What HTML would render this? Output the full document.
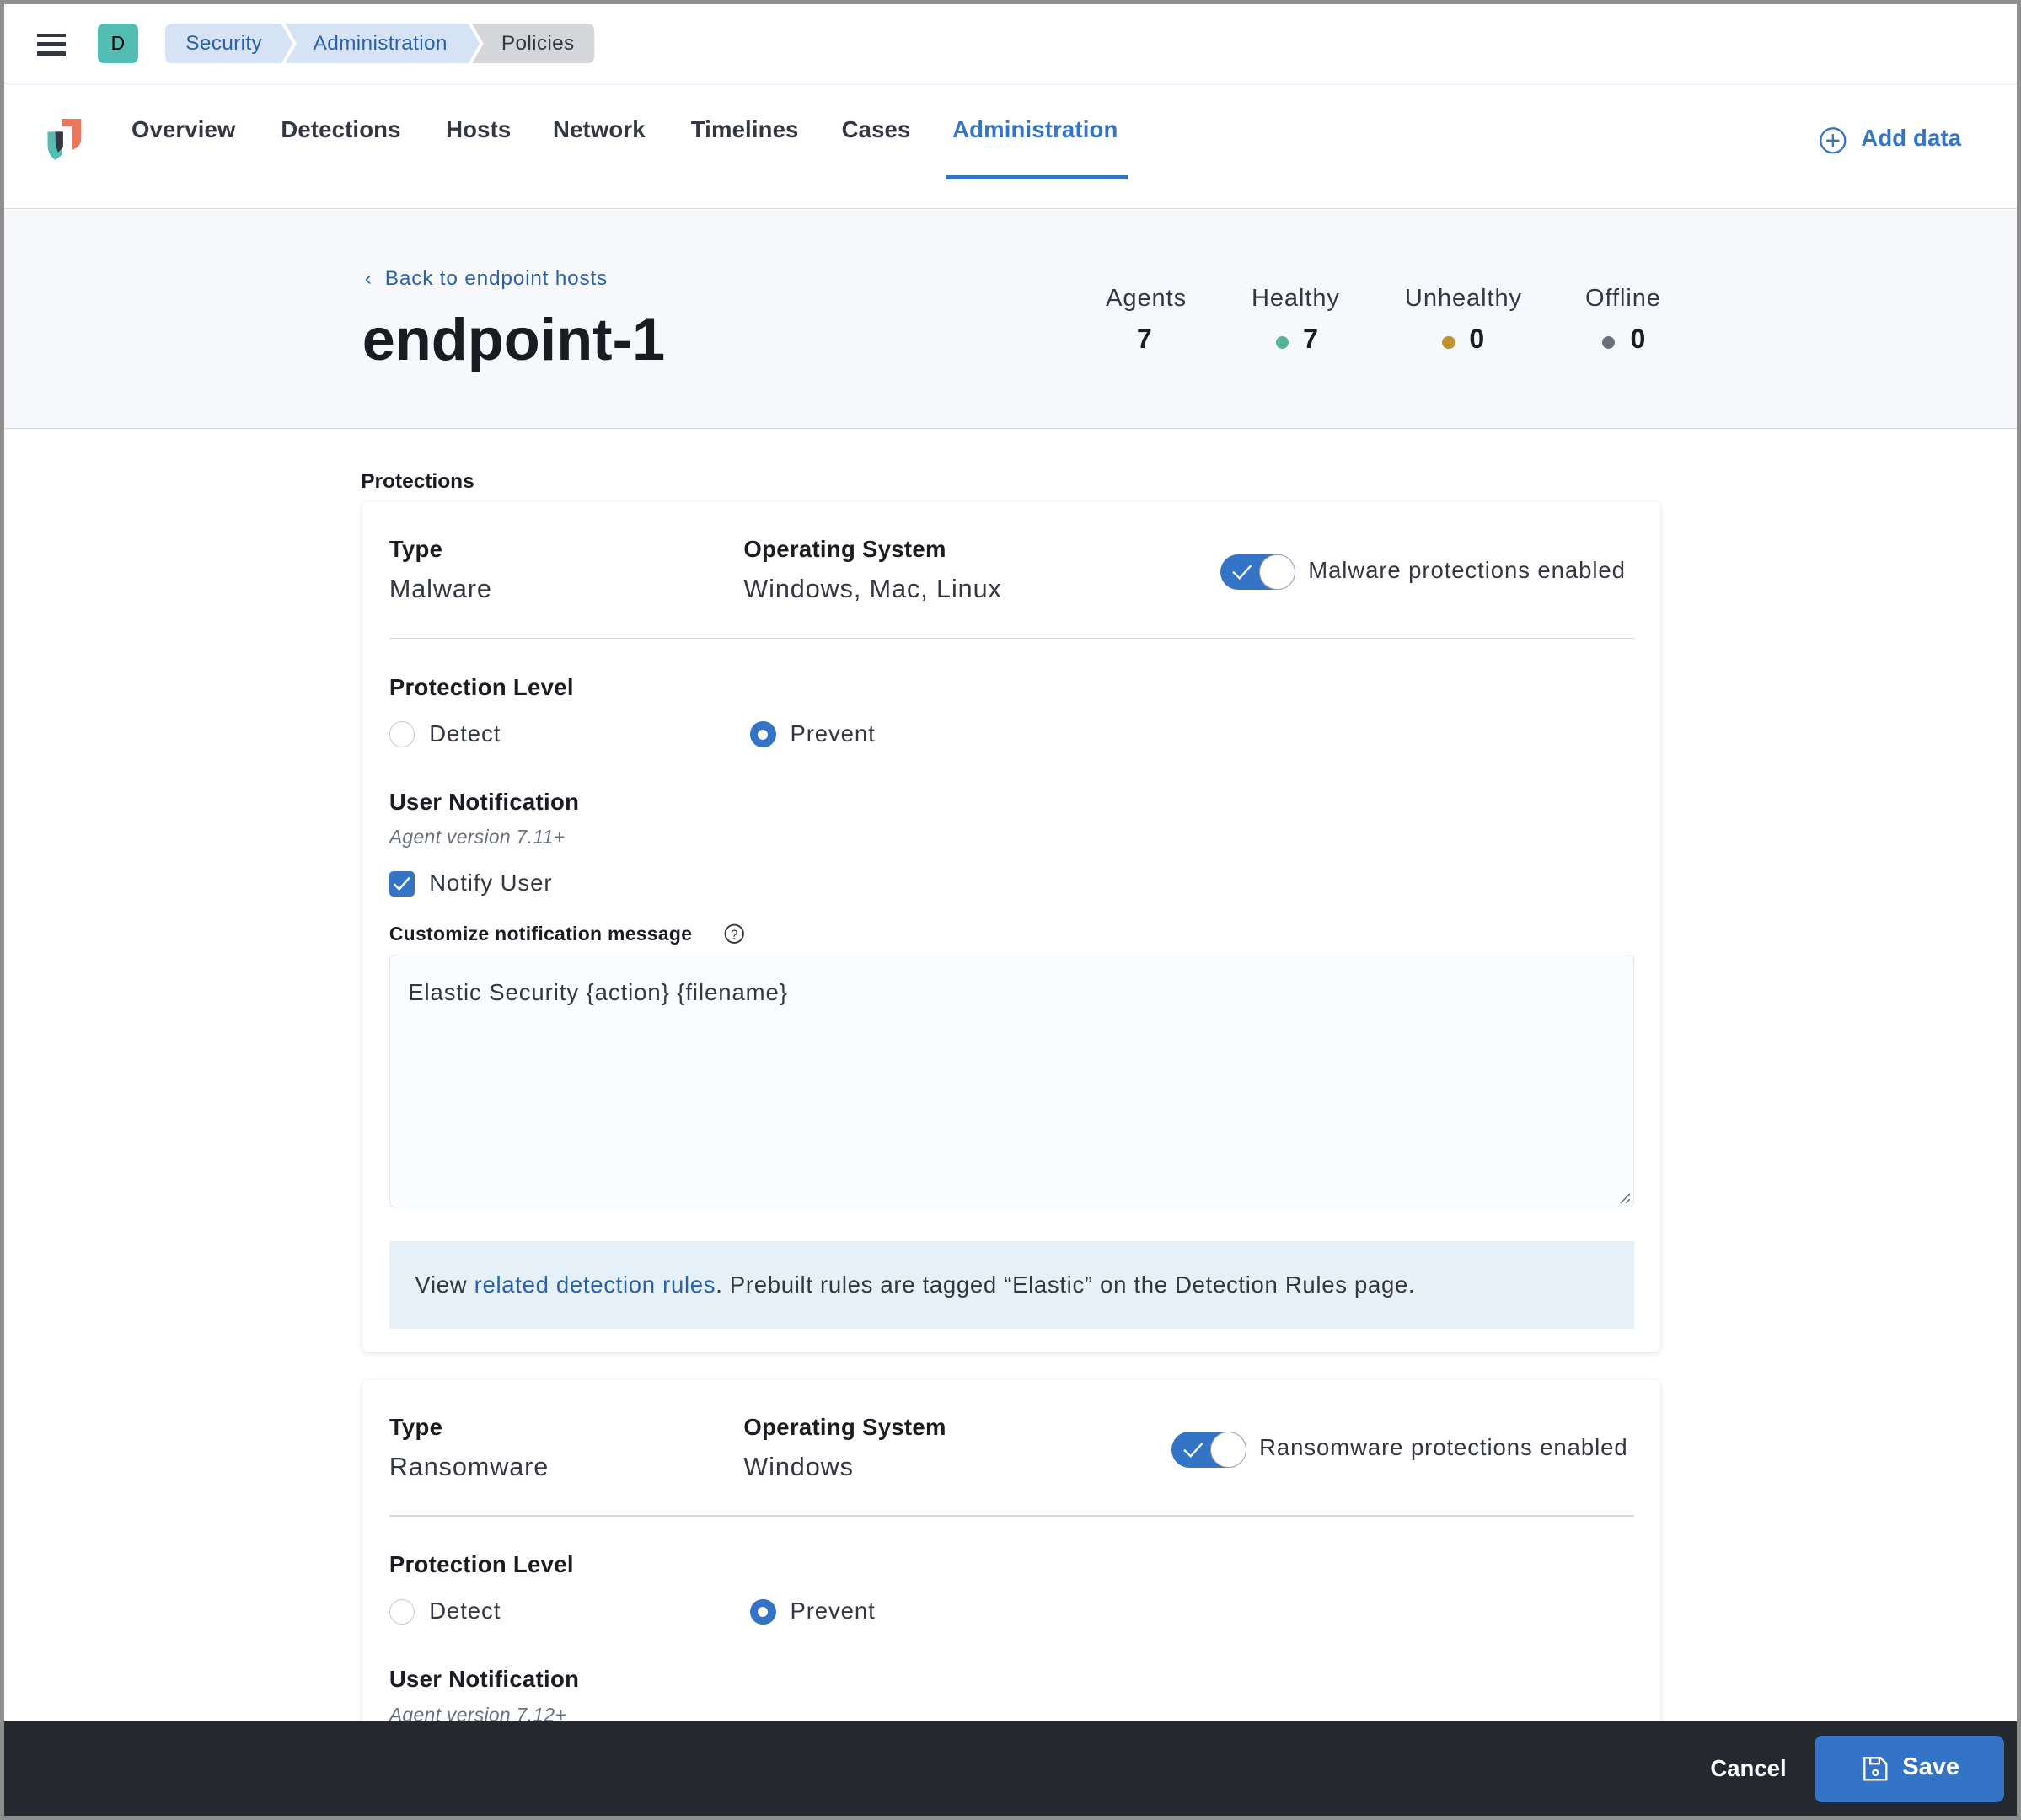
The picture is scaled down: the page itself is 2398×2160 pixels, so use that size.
<!DOCTYPE html>
<html><head><meta charset="utf-8"><style>
*{box-sizing:border-box;margin:0;padding:0}
html,body{width:2398px;height:2160px;overflow:hidden;background:#8e8e8e}
#root{zoom:1.5293;position:relative;width:1568px;height:1412px;font-family:"Liberation Sans",sans-serif;color:#343741}
#frame{position:absolute;left:3px;top:3px;width:1562px;height:1406px;background:#fff;overflow:hidden}
.abs{position:absolute}
.r{letter-spacing:0.6px}
.top{left:0;top:0;width:1562px;height:62px;background:#fff;border-bottom:1px solid #d3dae6;box-shadow:0 2px 3px rgba(0,0,0,.06)}
.crumb{position:absolute;top:15px;height:31px;line-height:31px;font-size:16px;letter-spacing:0.2px}
.nav{left:0;top:63px;width:1562px;height:96px;background:#fff;border-bottom:1px solid #d3dae6}
.nav span{position:absolute;top:24px;font-size:18px;font-weight:bold;color:#343741;letter-spacing:0.1px}
.hdr{left:0;top:160px;width:1562px;height:170px;background:#f7f8fc;border-bottom:1px solid #d3dae6}
.card{background:#fff;box-shadow:0 1px 4px rgba(0,0,0,.12);border-radius:4px}
.lbl{font-weight:bold;font-size:18px;color:#1a1c21;letter-spacing:0.2px}
.val{font-size:20px;color:#343741;letter-spacing:0.6px}
.radio{width:20px;height:20px;border-radius:50%;border:1px solid #c4c9d4;background:#fff}
.radio.on{background:#3474c7;border:none}
.radio.on::after{content:"";position:absolute;left:6px;top:6px;width:8px;height:8px;border-radius:50%;background:#fff}
.tog{width:58px;height:28px;border-radius:14px;background:#3474c7}
.tog::after{content:"";position:absolute;right:0;top:0;width:28px;height:28px;border-radius:50%;background:#fff;border:1px solid #98a2b3;box-sizing:border-box}
</style></head><body><div id="root"><div id="frame">
<div class="abs top">
 <div class="abs" style="left:26px;top:23px;width:22px;height:3px;background:#343741"></div>
 <div class="abs" style="left:26px;top:30px;width:22px;height:3px;background:#343741"></div>
 <div class="abs" style="left:26px;top:37px;width:22px;height:3px;background:#343741"></div>
 <div class="abs" style="left:73px;top:15px;width:31px;height:31px;border-radius:5px;background:#54bdb3;text-align:center;line-height:31px;font-size:15px;color:#000">D</div>
 <svg class="abs" style="left:125px;top:15px" width="335" height="31"><path d="M6 0H90L99 15.5L90 31H6Q0 31 0 25V6Q0 0 6 0Z" fill="#d6e3f4"/><path d="M93 0H235L244 15.5L235 31H93L102 15.5Z" fill="#d6e3f4"/><path d="M238 0H327Q333 0 333 6V25Q333 31 327 31H238L247 15.5Z" fill="#d5d6da"/></svg>
 <div class="crumb" style="left:141px;color:#2a62a8">Security</div>
 <div class="crumb" style="left:240px;color:#2a62a8">Administration</div>
 <div class="crumb" style="left:386px;color:#343741">Policies</div>
</div>
<div class="abs nav">
 <svg class="abs" style="left:33px;top:24px" width="30" height="36"><path d="M12 2H27V17Q27 24 20 26V8H12Z" fill="#e9785b"/><path d="M1 12H12V30L7 34Q1 30 1 22Z" fill="#54bdb3"/><path d="M7 12H13V24L9 28Q7 22 7 18Z" fill="#343741"/></svg>
 <span style="left:99px">Overview</span><span style="left:215px">Detections</span><span style="left:343px">Hosts</span><span style="left:426px">Network</span><span style="left:533px">Timelines</span><span style="left:650px">Cases</span><span style="left:736px;color:#3474c7">Administration</span>
 <div class="abs" style="left:731px;top:70px;width:141px;height:3px;background:#3474c7"></div>
 <svg class="abs" style="left:1408px;top:32px" width="22" height="22"><circle cx="11" cy="11" r="9.5" fill="none" stroke="#3474c7" stroke-width="1.5"/><path d="M11 6V16M6 11H16" stroke="#3474c7" stroke-width="1.5"/></svg>
 <span style="left:1441px;top:31px;color:#3474c7">Add data</span>
</div>
<div class="abs hdr">
 <div class="abs" style="left:280px;top:44px;font-size:16px;color:#2a62a8;letter-spacing:0.5px">‹&nbsp; Back to endpoint hosts</div>
 <div class="abs" style="left:278px;top:74px;font-size:46px;font-weight:bold;color:#1a1c21">endpoint-1</div>
 <div class="abs r" style="left:855px;top:58px;font-size:19px">Agents</div>
 <div class="abs" style="left:879px;top:88px;font-size:21px;font-weight:bold;color:#1a1c21">7</div>
 <div class="abs r" style="left:968px;top:58px;font-size:19px">Healthy</div>
 <div class="abs" style="left:987px;top:98px;width:10px;height:10px;border-radius:50%;background:#54b399"></div>
 <div class="abs" style="left:1008px;top:88px;font-size:21px;font-weight:bold;color:#1a1c21">7</div>
 <div class="abs r" style="left:1087px;top:58px;font-size:19px">Unhealthy</div>
 <div class="abs" style="left:1116px;top:98px;width:10px;height:10px;border-radius:50%;background:#c29231"></div>
 <div class="abs" style="left:1137px;top:88px;font-size:21px;font-weight:bold;color:#1a1c21">0</div>
 <div class="abs r" style="left:1227px;top:58px;font-size:19px">Offline</div>
 <div class="abs" style="left:1240px;top:98px;width:10px;height:10px;border-radius:50%;background:#6a717d"></div>
 <div class="abs" style="left:1262px;top:88px;font-size:21px;font-weight:bold;color:#1a1c21">0</div>
</div>
<div class="abs" style="left:277px;top:362px;font-size:16px;font-weight:bold;color:#1a1c21">Protections</div>

<div class="abs card" style="left:278px;top:387px;width:1007px;height:659px">
 <div class="abs lbl" style="left:21px;top:26px">Type</div>
 <div class="abs val" style="left:21px;top:56px">Malware</div>
 <div class="abs lbl" style="left:296px;top:26px">Operating System</div>
 <div class="abs val" style="left:296px;top:56px">Windows, Mac, Linux</div>
 <div class="abs tog" style="left:666px;top:40px"></div>
 <svg class="abs" style="left:674px;top:47px" width="18" height="14"><path d="M2 7L7 12L16 2" fill="none" stroke="#fff" stroke-width="1.5"/></svg>
 <div class="abs r" style="left:734px;top:42px;font-size:18px">Malware protections enabled</div>
 <div class="abs" style="left:21px;top:105px;width:966px;height:1px;background:#d3dae6"></div>
 <div class="abs lbl" style="left:21px;top:133px">Protection Level</div>
 <div class="abs radio" style="left:21px;top:170px"></div>
 <div class="abs r" style="left:52px;top:169px;font-size:18px">Detect</div>
 <div class="abs radio on" style="left:301px;top:170px"></div>
 <div class="abs r" style="left:332px;top:169px;font-size:18px">Prevent</div>
 <div class="abs lbl" style="left:21px;top:222px">User Notification</div>
 <div class="abs" style="left:21px;top:251px;font-size:15px;font-style:italic;color:#69707d;letter-spacing:0.2px">Agent version 7.11+</div>
 <div class="abs" style="left:21px;top:286px;width:20px;height:20px;border-radius:3px;background:#3474c7"></div>
 <svg class="abs" style="left:24px;top:290px" width="14" height="12"><path d="M1 6L5 10L13 1" fill="none" stroke="#fff" stroke-width="1.6"/></svg>
 <div class="abs r" style="left:52px;top:285px;font-size:18px">Notify User</div>
 <div class="abs" style="left:21px;top:326px;font-size:15px;font-weight:bold;color:#1a1c21;letter-spacing:0.2px">Customize notification message</div>
 <svg class="abs" style="left:281px;top:327px" width="16" height="16"><circle cx="8" cy="8" r="7" fill="none" stroke="#343741" stroke-width="1.2"/><text x="8" y="12" font-size="10" text-anchor="middle" font-family="Liberation Sans" fill="#343741">?</text></svg>
 <div class="abs" style="left:21px;top:351px;width:966px;height:196px;background:#fbfcfd;border:1px solid #dfe3ea;border-radius:4px">
  <div class="abs r" style="left:14px;top:18px;font-size:18px">Elastic Security {action} {filename}</div>
  <svg class="abs" style="right:2px;bottom:2px" width="10" height="10"><path d="M9 2L2 9M9 6L6 9" stroke="#69707d"/></svg>
 </div>
 <div class="abs" style="left:21px;top:573px;width:966px;height:68px;background:#e6f0f8">
  <div class="abs" style="left:20px;top:24px;font-size:18px;letter-spacing:0.45px">View <span style="color:#2a62a8">related detection rules</span>. Prebuilt rules are tagged “Elastic” on the Detection Rules page.</div>
 </div>
</div>

<div class="abs card" style="left:278px;top:1068px;width:1007px;height:400px">
 <div class="abs lbl" style="left:21px;top:26px">Type</div>
 <div class="abs val" style="left:21px;top:56px">Ransomware</div>
 <div class="abs lbl" style="left:296px;top:26px">Operating System</div>
 <div class="abs val" style="left:296px;top:56px">Windows</div>
 <div class="abs tog" style="left:628px;top:40px"></div>
 <svg class="abs" style="left:636px;top:47px" width="18" height="14"><path d="M2 7L7 12L16 2" fill="none" stroke="#fff" stroke-width="1.5"/></svg>
 <div class="abs r" style="left:696px;top:42px;font-size:18px">Ransomware protections enabled</div>
 <div class="abs" style="left:21px;top:105px;width:966px;height:1px;background:#d3dae6"></div>
 <div class="abs lbl" style="left:21px;top:133px">Protection Level</div>
 <div class="abs radio" style="left:21px;top:170px"></div>
 <div class="abs r" style="left:52px;top:169px;font-size:18px">Detect</div>
 <div class="abs radio on" style="left:301px;top:170px"></div>
 <div class="abs r" style="left:332px;top:169px;font-size:18px">Prevent</div>
 <div class="abs lbl" style="left:21px;top:222px">User Notification</div>
 <div class="abs" style="left:21px;top:251px;font-size:15px;font-style:italic;color:#69707d;letter-spacing:0.2px">Agent version 7.12+</div>
</div>

<div class="abs" style="left:0;top:1333px;width:1562px;height:73px;background:#25282f">
 <div class="abs" style="left:1324px;top:26px;font-size:18px;font-weight:bold;color:#fff">Cancel</div>
 <div class="abs" style="left:1405px;top:11px;width:147px;height:52px;border-radius:6px;background:#3474c7">
  <svg class="abs" style="left:37px;top:16px" width="20" height="20"><path d="M1.5 1.5H14L18.5 6V18.5H1.5Z" fill="none" stroke="#fff" stroke-width="1.5"/><path d="M6 1.5V6H13V1.5" fill="none" stroke="#fff" stroke-width="1.5"/><circle cx="10" cy="13" r="2" fill="none" stroke="#fff" stroke-width="1.5"/></svg>
  <div class="abs" style="left:68px;top:14px;font-size:19px;font-weight:bold;color:#fff">Save</div>
 </div>
</div>
</div></div></body></html>
